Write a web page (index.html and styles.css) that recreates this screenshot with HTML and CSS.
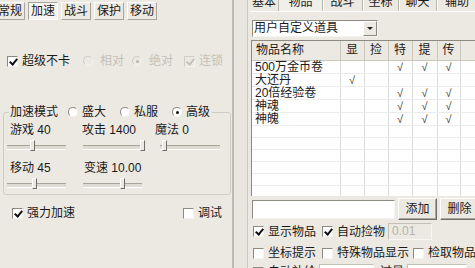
FILE: index.html
```html
<!DOCTYPE html>
<html lang="zh">
<head>
<meta charset="utf-8">
<title>设置</title>
<link rel="stylesheet" href="styles.css">
</head>
<body>
<div class="app">
  <section class="left">
    <nav class="ltabs">
      <span class="ltab">常规</span><span class="ltab is-sel">加速</span><span class="ltab">战斗</span><span class="ltab">保护</span><span class="ltab">移动</span>
    </nav>
    <div class="opts">
      <label class="ctl"><i class="cb on"></i>超级不卡</label>
      <label class="ctl dis o2"><i class="rb"></i>相对</label>
      <label class="ctl dis o3"><i class="rb on"></i>绝对</label>
      <label class="ctl dis o4"><i class="cb on"></i>连锁</label>
    </div>
    <fieldset class="grp">
      <legend class="grp-legend">加速模式<label class="ctl l1"><i class="rb"></i>盛大</label><label class="ctl l2"><i class="rb"></i>私服</label><label class="ctl l3"><i class="rb on"></i>高级</label></legend>
      <div class="sliders">
        <div class="sl"><span class="sl-label lab-a">游戏 40</span><div class="track tw59"><b class="thumb" style="left:23px"></b></div></div>
        <div class="sl"><span class="sl-label lab-b">攻击 1400</span><div class="track tw62"><b class="thumb" style="left:57px"></b></div></div>
        <div class="sl"><span class="sl-label lab-c">魔法 0</span><div class="track tw60"><b class="thumb" style="left:2px"></b></div></div>
        <div class="sl"><span class="sl-label lab-a">移动 45</span><div class="track tw59"><b class="thumb" style="left:25px"></b></div></div>
        <div class="sl"><span class="sl-label lab-d">变速 10.00</span><div class="track tw59"><b class="thumb" style="left:37px"></b></div></div>
      </div>
    </fieldset>
    <div class="foot">
      <label class="ctl"><i class="cb on"></i>强力加速</label>
      <label class="ctl"><i class="cb"></i>调试</label>
    </div>
  </section>
  <div class="gutter"></div>
  <section class="right">
    <nav class="rtabs">
      <span class="rtab t1">基本</span><span class="rtab t2 is-sel">物品</span><span class="rtab t3">战斗</span><span class="rtab t4">坐标</span><span class="rtab t5">聊天</span><span class="rtab t6">辅助</span>
    </nav>
    <div class="combo"><span class="combo-text">用户自定义道具</span><span class="combo-btn"><i class="arrow"></i></span></div>
    <div class="list">
      <table class="grid">
        <colgroup><col class="c-name"><col class="c-s"><col class="c-s"><col class="c-s"><col class="c-m"><col class="c-n"><col class="c-r"></colgroup>
        <thead>
          <tr><th class="name">物品名称</th><th>显</th><th>捡</th><th>特</th><th>提</th><th>传</th><th></th></tr>
        </thead>
        <tbody>
          <tr><td class="name">500万金币卷</td><td></td><td></td><td class="ck">√</td><td class="ck">√</td><td class="ck">√</td><td></td></tr>
          <tr><td class="name">大还丹</td><td class="ck">√</td><td></td><td></td><td></td><td></td><td></td></tr>
          <tr><td class="name">20倍经验卷</td><td></td><td></td><td class="ck">√</td><td class="ck">√</td><td class="ck">√</td><td></td></tr>
          <tr><td class="name">神魂</td><td></td><td></td><td class="ck">√</td><td class="ck">√</td><td class="ck">√</td><td></td></tr>
          <tr><td class="name">神魄</td><td></td><td></td><td class="ck">√</td><td class="ck">√</td><td class="ck">√</td><td></td></tr>
          <tr><td></td><td></td><td></td><td></td><td></td><td></td><td></td></tr>
          <tr><td></td><td></td><td></td><td></td><td></td><td></td><td></td></tr>
          <tr><td></td><td></td><td></td><td></td><td></td><td></td><td></td></tr>
          <tr><td></td><td></td><td></td><td></td><td></td><td></td><td></td></tr>
          <tr><td></td><td></td><td></td><td></td><td></td><td></td><td></td></tr>
          <tr><td></td><td></td><td></td><td></td><td></td><td></td><td></td></tr>
          <tr><td></td><td></td><td></td><td></td><td></td><td></td><td></td></tr>
          <tr><td></td><td></td><td></td><td></td><td></td><td></td><td></td></tr>
        </tbody>
      </table>
    </div>
    <div class="addrow">
      <span class="field"></span>
      <span class="btn">添加</span>
      <span class="btn">删除</span>
    </div>
    <div class="crow crow1">
      <label class="ctl"><i class="cb on"></i>显示物品</label>
      <label class="ctl m6"><i class="cb on"></i>自动捡物</label>
      <span class="numbox">0.01</span>
    </div>
    <div class="crow crow2">
      <label class="ctl"><i class="cb"></i>坐标提示</label>
      <label class="ctl m6"><i class="cb"></i>特殊物品显示</label>
      <label class="ctl m4"><i class="cb"></i>检取物品</label>
    </div>
    <div class="crow crow3">
      <label class="ctl"><i class="cb"></i>自动补给</label>
      <span class="numbox wide m6"></span>
      <span class="m6">过量</span>
      <span class="numbox wide2 m4"></span>
    </div>
  </section>
</div>
</body>
</html>
```
FILE: styles.css
```css
* { box-sizing: border-box; }
html, body { margin: 0; padding: 0; }
body {
  width: 475px;
  height: 268px;
  overflow: hidden;
  background: #ece9e2;
  color: #1a1a1a;
  font: 12px/14px "Liberation Sans", "Noto Sans CJK SC", sans-serif;
}
.app { display: flex; height: 268px; }

/* ---------- left panel ---------- */
.left {
  width: 234px;
  flex: none;
  display: flex;
  flex-direction: column;
  border-right: 2px solid #bdbab1;
}
.left > * { flex: none; }
.gutter {
  width: 14px;
  flex: none;
  background: #e9e6df;
  border-right: 1px solid #c9c6bd;
}
.ltabs { display: flex; gap: 3px; height: 18px; margin: 2px 0 0 -5px; }
.ltab {
  width: 30px;
  height: 18px;
  flex: none;
  text-align: center;
  padding-top: 1px;
  border: 1px solid;
  border-color: #fff #a7a49b #a7a49b #fff;
  background: #ece9e2;
}
.ltab.is-sel { background: #f6f5f1; border-color: #a7a49b #fff #fff #a7a49b; }

.ctl { display: inline-flex; align-items: center; gap: 4px; white-space: nowrap; }
.cb {
  position: relative;
  width: 11px;
  height: 11px;
  flex: none;
  background: #fff;
  border: 1px solid;
  border-color: #8d8a82 #f4f3ef #f4f3ef #8d8a82;
}
.cb.on::after {
  content: "";
  position: absolute;
  left: 3px;
  top: 0;
  width: 3px;
  height: 6px;
  border: solid #111;
  border-width: 0 2px 2px 0;
  transform: rotate(40deg);
}
.rb {
  position: relative;
  width: 10px;
  height: 10px;
  flex: none;
  border-radius: 50%;
  background: #fff;
  border: 1px solid;
  border-color: #8d8a82 #f4f3ef #f4f3ef #8d8a82;
}
.rb.on::after {
  content: "";
  position: absolute;
  left: 3px;
  top: 3px;
  width: 3px;
  height: 3px;
  border-radius: 50%;
  background: #111;
}
.dis { color: #c4c1b8; }
.dis .cb, .dis .rb { background: #ece9e2; border-color: #cfccc3 #f4f3ef #f4f3ef #cfccc3; }
.dis .cb.on::after { border-color: #c4c1b8; }
.dis .rb.on::after { background: #b9b6ad; }

.opts { display: flex; align-items: center; height: 14px; margin-top: 34px; padding-left: 7px; }
.opts .rb { margin-right: 3px; }
.o2 { margin-left: 13px; }
.o3 { margin-left: 8px; }
.o4 { margin-left: 11px; }

.grp {
  margin: 37px 1px 0 3px;
  padding: 0 0 0 3px;
  height: 90px;
  min-width: 0;
  border: 1px solid #d0cdc2;
  border-radius: 3px;
}
.grp-legend { display: flex; align-items: center; height: 14px; margin-left: 2px; padding: 0 2px 0 1px; }
.l1 { margin-left: 10px; }
.l2 { margin-left: 14px; }
.l3 { margin-left: 14px; }

.sliders { display: grid; grid-template-columns: 76px 77px 1fr; row-gap: 8px; padding-top: 4px; }
.sl { display: flex; flex-direction: column; gap: 2px; }
.sl-label { height: 14px; white-space: nowrap; }
.lab-a { padding-left: 3px; }
.lab-b { margin-left: -1px; }
.lab-c { margin-left: -5px; }
.lab-d { margin-left: 1px; }
.track { position: relative; height: 14px; }
.track::before {
  content: "";
  position: absolute;
  left: 0;
  right: 0;
  top: 6px;
  height: 3px;
  border-top: 1px solid #a7a49b;
  border-bottom: 1px solid #fff;
  background: #dedbd3;
}
.tw59 { width: 59px; }
.tw60 { width: 60px; }
.tw62 { width: 62px; }
.thumb {
  position: absolute;
  top: 1px;
  width: 5px;
  height: 11px;
  background: #ece9e2;
  border: 1px solid;
  border-color: #fff #6f6c65 #6f6c65 #fff;
}

.foot {
  display: flex;
  justify-content: space-between;
  align-items: center;
  height: 14px;
  margin-top: 11px;
  padding: 0 10px 0 12px;
}

/* ---------- right panel ---------- */
.right {
  flex: 1;
  min-width: 0;
  display: flex;
  flex-direction: column;
  padding-left: 2px;
  overflow: hidden;
}
.right > * { flex: none; }
.rtabs { display: flex; height: 17px; margin-top: -5px; border-bottom: 1px solid #fff; }
.rtab { flex: none; text-align: center; border-right: 1px solid #b9b6ad; box-shadow: 1px 0 #fff; }
.rtab.is-sel { background: #f1efe9; }
.t1 { width: 29px; }
.t2 { width: 44px; }
.t3 { width: 40px; }
.t4 { width: 36px; }
.t5 { width: 38px; }
.t6 { width: 40px; border-right: 0; }

.combo {
  display: flex;
  width: 126px;
  height: 17px;
  margin: 8px 0 0 2px;
  background: #fff;
  border: 1px solid;
  border-color: #8d8a82 #f4f3ef #f4f3ef #8d8a82;
}
.combo-text { flex: 1; padding-left: 1px; line-height: 15px; white-space: nowrap; }
.combo-btn {
  width: 14px;
  display: flex;
  align-items: center;
  justify-content: center;
  background: #ece9e2;
  border: 1px solid;
  border-color: #fff #8d8a82 #8d8a82 #fff;
}
.arrow { width: 0; height: 0; border-left: 3px solid transparent; border-right: 3px solid transparent; border-top: 3px solid #222; }

.list {
  height: 156px;
  margin: 3px 0 0 1px;
  overflow: hidden;
  background: #fff;
  border-top: 1px solid #8d8a82;
  border-left: 1px solid #8d8a82;
}
.grid { border-collapse: collapse; table-layout: fixed; width: 300px; }
.c-name { width: 88px; }
.c-s { width: 24px; }
.c-m { width: 25px; }
.c-n { width: 23px; }
.c-r { width: 92px; }
.grid th {
  height: 19px;
  padding: 0;
  font-weight: normal;
  text-align: center;
  background: #ece9e2;
  border-right: 1px solid #c9c6bd;
  border-bottom: 1px solid #c9c6bd;
}
.grid th.name { text-align: left; padding-left: 4px; }
.grid td {
  height: 12px;
  padding: 0;
  line-height: 12px;
  text-align: center;
  border-right: 1px solid #dcdcdc;
  border-bottom: 1px solid #ececec;
  white-space: nowrap;
}
.grid td.name { text-align: left; padding-left: 3px; }
.grid td.ck { font-size: 11px; font-style: italic; color: #333; }

.addrow { display: flex; align-items: center; gap: 3px; height: 22px; margin-top: 2px; padding-left: 2px; }
.field {
  width: 143px;
  height: 19px;
  flex: none;
  background: #fff;
  border: 1px solid;
  border-color: #8d8a82 #f4f3ef #f4f3ef #8d8a82;
}
.btn {
  width: 39px;
  height: 22px;
  flex: none;
  text-align: center;
  line-height: 20px;
  background: #ece9e2;
  border: 1px solid;
  border-color: #fff #6f6c65 #6f6c65 #fff;
  box-shadow: inset -1px -1px #aca899;
}

.crow { display: flex; align-items: center; padding-left: 3px; white-space: nowrap; }
.crow1 { height: 17px; margin-top: 3px; }
.crow2 { height: 16px; margin-top: 5px; }
.crow3 { height: 16px; margin-top: 3px; }
.m6 { margin-left: 6px; }
.m4 { margin-left: 4px; }
.numbox {
  width: 44px;
  height: 17px;
  flex: none;
  margin-left: 3px;
  padding-left: 3px;
  line-height: 15px;
  color: #b5b2a9;
  background: #ece9e2;
  border: 1px solid;
  border-color: #c2bfb6 #f7f6f2 #f7f6f2 #c2bfb6;
}
.numbox.wide { width: 55px; background: #fff; }
.numbox.wide2 { width: 60px; background: #fff; }
```
